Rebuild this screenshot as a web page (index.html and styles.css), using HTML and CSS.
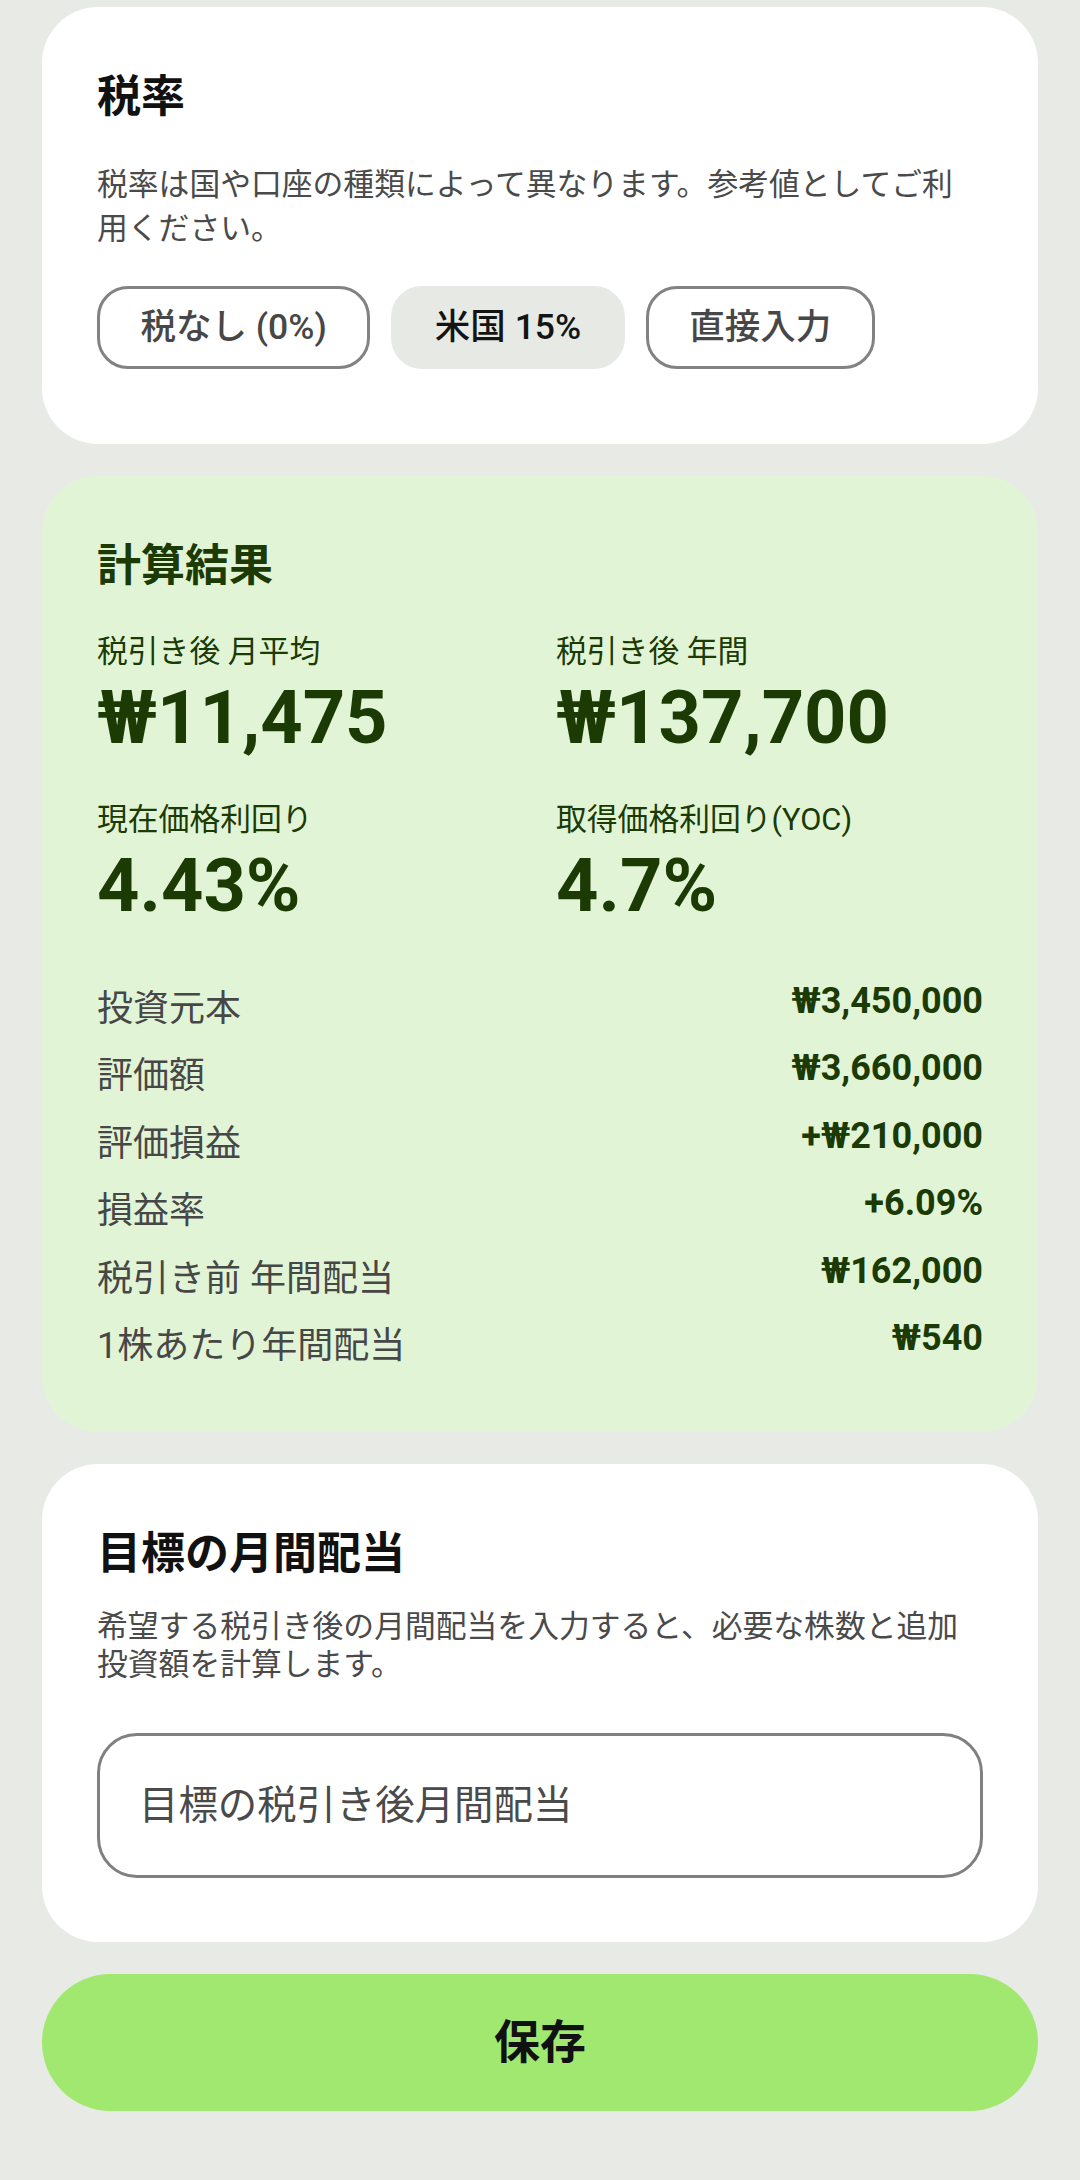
FILE: index.html
```html
<!DOCTYPE html>
<html lang="ja">
<head>
<meta charset="utf-8">
<title>配当計算</title>
<link rel="stylesheet" href="styles.css">
</head>
<body>
<div class="page">
  <section class="card card-tax">
    <h2 class="card-title">税率</h2>
    <p class="desc desc-tax">税率は国や口座の種類によって異なります。参考値としてご利用ください。</p>
    <div class="chips">
      <button class="chip" type="button">税なし (0%)</button>
      <button class="chip chip-selected" type="button">米国 15%</button>
      <button class="chip" type="button">直接入力</button>
    </div>
  </section>

  <section class="card card-result">
    <h2 class="card-title title-green">計算結果</h2>
    <div class="stats">
      <div class="stat">
        <div class="stat-label">税引き後 月平均</div>
        <div class="stat-value">₩11,475</div>
      </div>
      <div class="stat">
        <div class="stat-label">税引き後 年間</div>
        <div class="stat-value">₩137,700</div>
      </div>
      <div class="stat">
        <div class="stat-label">現在価格利回り</div>
        <div class="stat-value">4.43%</div>
      </div>
      <div class="stat">
        <div class="stat-label">取得価格利回り(YOC)</div>
        <div class="stat-value">4.7%</div>
      </div>
    </div>
    <div class="rows">
      <div class="row"><span class="row-label">投資元本</span><span class="row-value">₩3,450,000</span></div>
      <div class="row"><span class="row-label">評価額</span><span class="row-value">₩3,660,000</span></div>
      <div class="row"><span class="row-label">評価損益</span><span class="row-value">+₩210,000</span></div>
      <div class="row"><span class="row-label">損益率</span><span class="row-value">+6.09%</span></div>
      <div class="row"><span class="row-label">税引き前 年間配当</span><span class="row-value">₩162,000</span></div>
      <div class="row"><span class="row-label">1株あたり年間配当</span><span class="row-value">₩540</span></div>
    </div>
  </section>

  <section class="card card-goal">
    <h2 class="card-title">目標の月間配当</h2>
    <p class="desc desc-goal">希望する税引き後の月間配当を入力すると、必要な株数と追加投資額を計算します。</p>
    <input class="goal-input" type="text" placeholder="目標の税引き後月間配当">
  </section>

  <button class="save" type="button">保存</button>
</div>
</body>
</html>
```

FILE: styles.css
```css
html, body {
  margin: 0;
  background: #e8eae5;
  font-family: Roboto, "Noto Sans CJK JP", sans-serif;
}

.page {
  display: flex;
  flex-direction: column;
  gap: 32px;
  padding: 7px 42px 0;
}

.card {
  background: #ffffff;
  border-radius: 56px;
  padding: 60px 55px 64px;
}

.card-tax {
  padding-bottom: 75px;
}

.card-result {
  background: #e1f5d6;
  padding-bottom: 63px;
}

.card-title {
  margin: 0;
  font-size: 44px;
  line-height: 60px;
  font-weight: 700;
  color: #111111;
}

.title-green {
  color: #1b3a04;
}

.desc {
  margin: 0;
  font-size: 30.8px;
  color: #4a4a4a;
}

.desc-tax {
  margin-top: 36px;
  line-height: 44px;
}

.desc-goal {
  margin-top: 24px;
  line-height: 38px;
}

.chips {
  display: flex;
  gap: 21px;
  margin-top: 35px;
}

.chip {
  height: 83px;
  padding: 0 40.5px;
  border: 3px solid #828282;
  border-radius: 31px;
  background: transparent;
  font-family: Roboto, "Noto Sans CJK JP", sans-serif;
  font-size: 35.5px;
  font-weight: 500;
  line-height: 1;
  color: #474747;
}

.chip-selected {
  border-color: transparent;
  background: #e7eae4;
  color: #141414;
}

.stats {
  display: grid;
  grid-template-columns: 1fr 1fr;
  column-gap: 32px;
  row-gap: 36px;
  margin-top: 34px;
}

.stat-label {
  font-size: 30.8px;
  line-height: 44px;
  color: #1b3a04;
}

.stat-value {
  font-size: 74px;
  line-height: 88px;
  font-weight: 700;
  color: #1b3a04;
}

.rows {
  display: flex;
  flex-direction: column;
  gap: 21.4px;
  margin-top: 56px;
}

.row {
  display: flex;
  justify-content: space-between;
  align-items: flex-start;
}

.row-label {
  font-size: 36px;
  line-height: 46px;
  color: #474747;
}

.row-value {
  font-size: 36px;
  line-height: 30px;
  font-weight: 700;
  color: #1b3a04;
}

.goal-input {
  display: block;
  box-sizing: border-box;
  width: 100%;
  height: 145px;
  margin: 48.6px 0 0;
  border: 3px solid #808080;
  border-radius: 40px;
  padding: 0 0 0 39px;
  background: #ffffff;
  font-family: Roboto, "Noto Sans CJK JP", sans-serif;
  font-size: 39.4px;
  color: #222222;
  outline: none;
}

.goal-input::placeholder {
  color: #4a4a4a;
  opacity: 1;
}

.save {
  width: 100%;
  height: 137px;
  border: none;
  border-radius: 69px;
  background: #a0e870;
  font-family: Roboto, "Noto Sans CJK JP", sans-serif;
  font-size: 46px;
  font-weight: 700;
  line-height: 1;
  color: #111111;
}
```
